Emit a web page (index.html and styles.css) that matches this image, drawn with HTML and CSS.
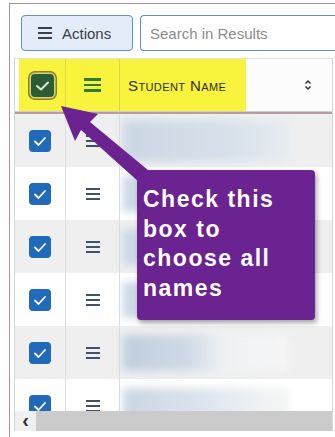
FILE: index.html
```html
<!DOCTYPE html>
<html lang="en">
<head>
    <meta charset="UTF-8">
    <meta name="viewport" content="width=device-width, initial-scale=1.0">
    <title>Student Results</title>
    <link rel="stylesheet" href="styles.css">
</head>
<body>
    <div class="frame">
        <div class="toolbar">
            <button class="actions">
                <span class="menu-icon"><i></i><i></i><i></i></span>
                Actions
            </button>
            <input class="search" type="text" placeholder="Search in Results">
        </div>

        <div class="grid">
            <div class="grid-head">
                <div class="cell cell-check">
                    <span class="check-all">
                        <svg width="23" height="23" viewBox="0 0 23 23"><polyline points="6,12 10,15.5 17,8.5" fill="none" stroke="#d9ecc9" stroke-width="2" stroke-linecap="round" stroke-linejoin="round"/></svg>
                    </span>
                </div>
                <div class="cell cell-menu">
                    <span class="menu-icon green"><i></i><i></i><i></i></span>
                </div>
                <div class="cell cell-name">
                    <span class="col-title">Student Name</span>
                    <svg class="sort" width="8" height="12" viewBox="0 0 8 12"><polyline points="1.5,4.5 4,2 6.5,4.5" fill="none" stroke="#333" stroke-width="1.5"/><polyline points="1.5,7.5 4,10 6.5,7.5" fill="none" stroke="#333" stroke-width="1.5"/></svg>
                </div>
            </div>

            <div class="grid-body">
                <div class="row">
                    <div class="cell cell-check"><span class="box"><svg width="22" height="22" viewBox="0 0 22 22"><polyline points="6,11.5 9.5,15 16,8" fill="none" stroke="#fff" stroke-width="1.8" stroke-linecap="round" stroke-linejoin="round"/></svg></span></div>
                    <div class="cell cell-menu"><span class="menu-icon small"><i></i><i></i><i></i></span></div>
                    <div class="cell cell-name"><div class="blur big"></div></div>
                </div>
                <div class="row">
                    <div class="cell cell-check"><span class="box"><svg width="22" height="22" viewBox="0 0 22 22"><polyline points="6,11.5 9.5,15 16,8" fill="none" stroke="#fff" stroke-width="1.8" stroke-linecap="round" stroke-linejoin="round"/></svg></span></div>
                    <div class="cell cell-menu"><span class="menu-icon small"><i></i><i></i><i></i></span></div>
                    <div class="cell cell-name"><div class="blur"></div></div>
                </div>
                <div class="row">
                    <div class="cell cell-check"><span class="box"><svg width="22" height="22" viewBox="0 0 22 22"><polyline points="6,11.5 9.5,15 16,8" fill="none" stroke="#fff" stroke-width="1.8" stroke-linecap="round" stroke-linejoin="round"/></svg></span></div>
                    <div class="cell cell-menu"><span class="menu-icon small"><i></i><i></i><i></i></span></div>
                    <div class="cell cell-name"><div class="blur"></div></div>
                </div>
                <div class="row">
                    <div class="cell cell-check"><span class="box"><svg width="22" height="22" viewBox="0 0 22 22"><polyline points="6,11.5 9.5,15 16,8" fill="none" stroke="#fff" stroke-width="1.8" stroke-linecap="round" stroke-linejoin="round"/></svg></span></div>
                    <div class="cell cell-menu"><span class="menu-icon small"><i></i><i></i><i></i></span></div>
                    <div class="cell cell-name"><div class="blur"></div></div>
                </div>
                <div class="row">
                    <div class="cell cell-check"><span class="box"><svg width="22" height="22" viewBox="0 0 22 22"><polyline points="6,11.5 9.5,15 16,8" fill="none" stroke="#fff" stroke-width="1.8" stroke-linecap="round" stroke-linejoin="round"/></svg></span></div>
                    <div class="cell cell-menu"><span class="menu-icon small"><i></i><i></i><i></i></span></div>
                    <div class="cell cell-name"><div class="blur short"></div></div>
                </div>
                <div class="row">
                    <div class="cell cell-check"><span class="box"><svg width="22" height="22" viewBox="0 0 22 22"><polyline points="6,11.5 9.5,15 16,8" fill="none" stroke="#fff" stroke-width="1.8" stroke-linecap="round" stroke-linejoin="round"/></svg></span></div>
                    <div class="cell cell-menu"><span class="menu-icon small"><i></i><i></i><i></i></span></div>
                    <div class="cell cell-name"><div class="blur"></div></div>
                </div>
            </div>

            <div class="hscroll">
                <span class="hscroll-btn">&lsaquo;</span>
                <span class="hscroll-thumb"></span>
            </div>
        </div>
    </div>

    <!-- annotation: arrow + callout -->
    <svg class="arrow" width="335" height="437" viewBox="0 0 335 437">
        <polygon points="61,106 98,114 90,122 160,180 150,192 81,130 75,141" fill="#6a2390"/>
    </svg>
    <div class="callout">Check this box to choose all names</div>
</body>
</html>
```

FILE: styles.css
```css
body {
    margin: 0;
    width: 335px;
    height: 437px;
    overflow: hidden;
    background: #fff;
    font-family: "Liberation Sans", Arial, sans-serif;
    position: relative;
}

.frame {
    margin: 3px 0 0 9px;
    width: 340px;
    height: 434px;
    box-sizing: border-box;
    border-left: 1px solid #a98f98;
    border-top: 1px solid #a98f98;
    padding-top: 11px;
}

.toolbar {
    display: flex;
    gap: 7px;
    margin-left: 11px;
    height: 36px;
}

.actions {
    display: flex;
    align-items: center;
    gap: 10px;
    flex: 0 0 112px;
    box-sizing: border-box;
    height: 36px;
    padding: 0 0 0 16px;
    background: #e3edf9;
    border: 1.5px solid #5f90cb;
    border-radius: 4px;
    font-family: "Liberation Sans", Arial, sans-serif;
    font-size: 15px;
    color: #3a3f45;
}

.search {
    flex: 0 0 205px;
    min-width: 0;
    height: 36px;
    box-sizing: border-box;
    border: 1.5px solid #5f90cb;
    border-right: 0;
    border-radius: 4px 0 0 4px;
    padding: 0 9px;
    font-family: "Liberation Sans", Arial, sans-serif;
    font-size: 15px;
}
.search::placeholder {
    color: #8c8c8c;
}

.menu-icon {
    display: flex;
    flex-direction: column;
    gap: 3px;
    width: 14px;
}
.menu-icon i {
    display: block;
    height: 2px;
    background: #3b4047;
}
.menu-icon.green {
    width: 17px;
    gap: 3px;
}
.menu-icon.green i {
    height: 2.5px;
    background: #2f7a34;
}
.menu-icon.small i {
    background: #3e5169;
}

.grid {
    margin: 7px 0 0 4px;
    width: 319px;
    box-sizing: border-box;
    border-left: 1px solid #d5d5d5;
    border-right: 1px solid #d8d8d8;
}

.grid-head,
.row {
    display: grid;
    grid-template-columns: 51px 54px 1fr;
}

.grid-head {
    height: 52px;
    border-top: 1px solid #e2e2e2;
    border-bottom: 1px solid #cfcfcf;
    background: linear-gradient(to right, #fff 0 4px, #f8f33c 4px 231px, #fcfcfc 231px);
}

.cell {
    display: flex;
    align-items: center;
    justify-content: center;
    border-right: 1px solid rgba(0, 0, 0, 0.1);
}
.cell-name {
    justify-content: flex-start;
    border-right: 0;
}

.check-all {
    width: 23px;
    height: 23px;
    margin-left: 4px;
    border-radius: 4px;
    background: #2b5c3a;
    box-shadow: 0 0 0 1.5px #d9d36a, 0 0 0 3px #8a7d2c;
}
.check-all svg {
    display: block;
}

.col-title {
    margin-left: 8px;
    font-size: 15px;
    font-variant: small-caps;
    letter-spacing: 0.4px;
    color: #2f2f2f;
}
.sort {
    margin-left: auto;
    margin-right: 20px;
}

.grid-body {
    height: 297px;
    overflow: hidden;
    border-top: 2px solid #b59ca5;
}

.row {
    height: 53px;
    background: #efefef;
}
.row:nth-child(even) {
    background: #fff;
}
.row .cell {
    border-right-color: #dedede;
}
.row .cell-name {
    padding: 0 0 0 3px;
}

.box {
    width: 22px;
    height: 22px;
    border-radius: 4px;
    background: #2169b9;
}
.box svg {
    display: block;
}

.blur {
    width: 166px;
    height: 36px;
    border-radius: 3px;
    background: linear-gradient(90deg, #c9d6e3 0, #dbe3ec 45%, #eef1f4 80%, #f4f4f4 100%);
    filter: blur(4px);
}
.blur.big {
    height: 42px;
    background: linear-gradient(90deg, #cbd7e4 0, #d6e0ea 60%, #e6ebf0 100%);
}
.blur.short {
    background: linear-gradient(90deg, #bfcedc 0, #cfdae6 40%, #eef1f4 60%, #f5f5f5 100%);
}

.hscroll {
    display: flex;
    height: 20px;
}
.hscroll-btn {
    width: 21px;
    background: #f0f0f0;
    color: #333;
    font-size: 20px;
    font-weight: bold;
    line-height: 18px;
    text-align: center;
}
.hscroll-thumb {
    flex: 1;
    background: #cbcbcb;
}

.arrow {
    position: absolute;
    top: 0;
    left: 0;
    pointer-events: none;
}

.callout {
    position: absolute;
    left: 137px;
    top: 170px;
    width: 178px;
    height: 150px;
    box-sizing: border-box;
    padding: 15px 6px 0 6px;
    background: #6a2390;
    border-radius: 4px;
    box-shadow: 2px 3px 5px rgba(0, 0, 0, 0.35);
    color: #fff;
    font-weight: bold;
    font-size: 23px;
    line-height: 29.5px;
    letter-spacing: 1.5px;
}
```
